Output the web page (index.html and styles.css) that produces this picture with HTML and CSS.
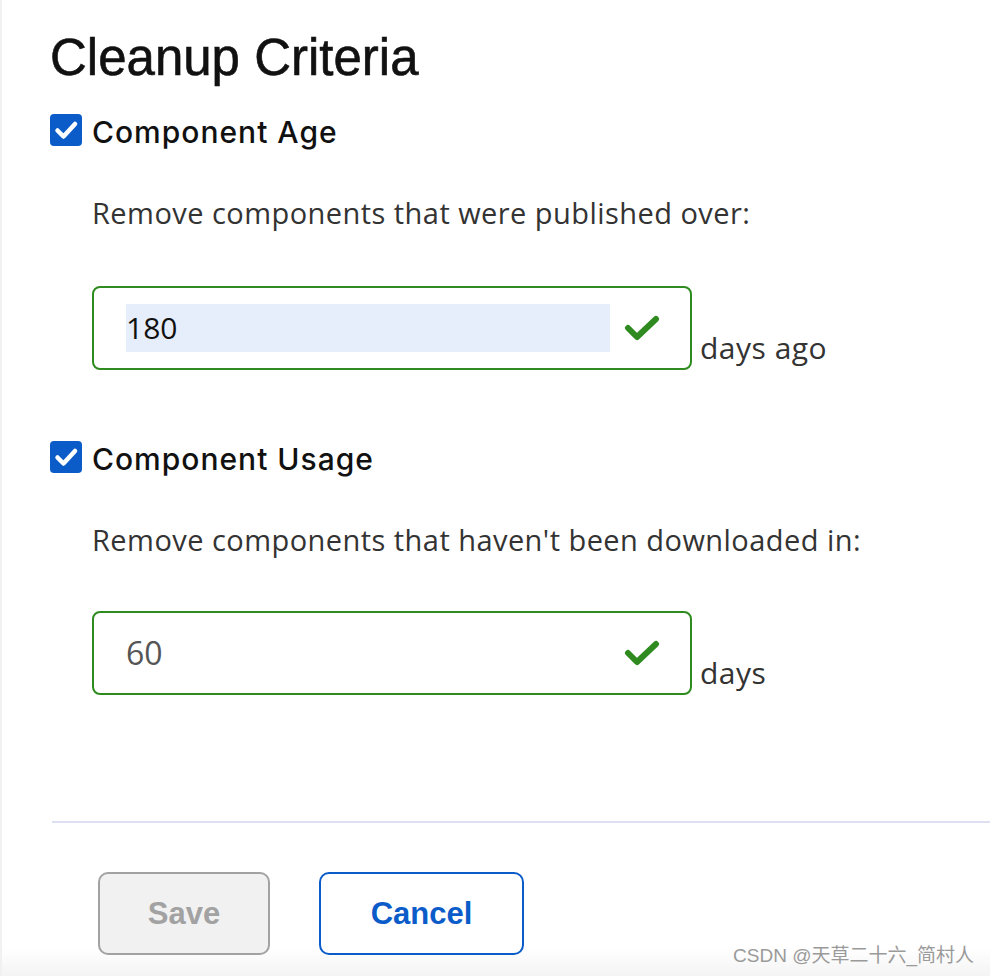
FILE: index.html
```html
<!DOCTYPE html>
<html>
<head>
<meta charset="utf-8">
<link rel="stylesheet" href="styles.css">
</head>
<body>
<div class="page">
  <h1 class="title">Cleanup Criteria</h1>

  <section class="criterion">
    <label class="check-row">
      <span class="checkbox"><svg viewBox="0 0 32 32" width="32" height="32"><path d="M7.5 16.5 L13.5 22.5 L25 10" fill="none" stroke="#fff" stroke-width="4.5" stroke-linecap="round" stroke-linejoin="round"/></svg></span>
      <span class="check-label">Component Age</span>
    </label>
    <p class="desc">Remove components that were published over:</p>
    <div class="field-row">
      <div class="field">
        <span class="value selected">180</span>
        <svg class="ok" viewBox="0 0 36 28" width="36" height="28"><path d="M4 14 L13 23 L32 5" fill="none" stroke="#2f8b20" stroke-width="6" stroke-linecap="round" stroke-linejoin="round"/></svg>
      </div>
      <span class="unit">days ago</span>
    </div>
  </section>

  <section class="criterion second">
    <label class="check-row">
      <span class="checkbox"><svg viewBox="0 0 32 32" width="32" height="32"><path d="M7.5 16.5 L13.5 22.5 L25 10" fill="none" stroke="#fff" stroke-width="4.5" stroke-linecap="round" stroke-linejoin="round"/></svg></span>
      <span class="check-label">Component Usage</span>
    </label>
    <p class="desc">Remove components that haven't been downloaded in:</p>
    <div class="field-row">
      <div class="field">
        <span class="value muted">60</span>
        <svg class="ok" viewBox="0 0 36 28" width="36" height="28"><path d="M4 14 L13 23 L32 5" fill="none" stroke="#2f8b20" stroke-width="6" stroke-linecap="round" stroke-linejoin="round"/></svg>
      </div>
      <span class="unit">days</span>
    </div>
  </section>

  <hr class="divider">

  <div class="actions">
    <button class="btn btn-save" disabled>Save</button>
    <button class="btn btn-cancel">Cancel</button>
  </div>
</div>
<div class="watermark">CSDN @天草二十六_简村人</div>
</body>
</html>
```

FILE: styles.css
```css
html, body {
  margin: 0;
  padding: 0;
  height: 100%;
}
body {
  background: linear-gradient(to bottom, #ffffff 0, #ffffff 948px, #f4f4f4 976px);
  font-family: "Open Sans", "Liberation Sans", sans-serif;
  color: #111;
  border-left: 2px solid #f1f1f1;
  box-sizing: border-box;
  position: relative;
  overflow: hidden;
}
.page {
  padding: 28px 0 0 48px;
}
.title {
  font-family: "Liberation Sans", Arial, sans-serif;
  font-weight: 400;
  font-size: 51px;
  line-height: 60px;
  margin: 0 0 24px 0;
  color: #111;
  -webkit-text-stroke: 0.6px #111;
}
.check-row {
  display: flex;
  align-items: center;
  gap: 10px;
  height: 36px;
}
.checkbox {
  width: 32px;
  height: 32px;
  background: #0b5cc9;
  border-radius: 4px;
  display: flex;
}
.check-label {
  font-family: "Inter", "Liberation Sans", sans-serif;
  font-weight: 500;
  font-size: 30px;
  letter-spacing: 1px;
  color: #111;
  padding-top: 4px;
}
.desc {
  margin: 46px 0 0 42px;
  font-size: 29px;
  letter-spacing: 0.45px;
  line-height: 38px;
  color: #333;
}
.field-row {
  display: flex;
  align-items: flex-end;
  margin: 54px 0 0 42px;
}
.second .field-row {
  margin-top: 52px;
}
.field {
  box-sizing: border-box;
  width: 600px;
  height: 84px;
  border: 2px solid #2f8b20;
  border-radius: 8px;
  display: flex;
  align-items: center;
  justify-content: space-between;
  padding: 0 30px 0 32px;
}
.value {
  font-size: 30px;
  line-height: 48px;
  height: 48px;
}
.selected {
  background: #e7eefb;
  color: #111;
  width: 484px;
}
.muted {
  color: #555;
  font-size: 32px;
}
.unit {
  margin: 0 0 3px 8px;
  font-size: 30px;
  letter-spacing: 0.5px;
  line-height: 38px;
  color: #333;
}
.second {
  margin-top: 69px;
}
.divider {
  border: none;
  height: 2px;
  background: #dde0f0;
  margin: 126px 0 0 2px;
}
.actions {
  display: flex;
  gap: 49px;
  margin: 49px 0 0 48px;
}
.btn {
  box-sizing: border-box;
  height: 83px;
  border-radius: 10px;
  font-family: "Liberation Sans", Arial, sans-serif;
  font-size: 31px;
  font-weight: 700;
  background: #fff;
}
.btn-save {
  width: 172px;
  border: 2px solid #a2a2a2;
  background: #f1f1f1;
  color: #a2a2a2;
}
.btn-cancel {
  width: 205px;
  border: 2px solid #0b5cc9;
  color: #0b5cc9;
}
.watermark {
  position: absolute;
  right: 16px;
  bottom: 9px;
  font-family: "Liberation Sans", "Noto Sans CJK SC", sans-serif;
  font-size: 19px;
  color: #9a9a9a;
}
```
